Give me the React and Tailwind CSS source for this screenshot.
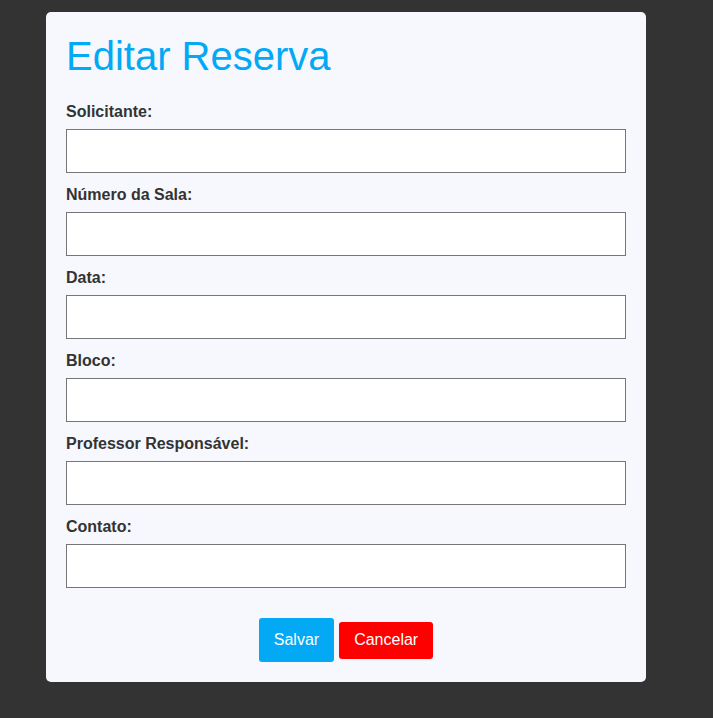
export default function App() {
  const fields = [
    "Solicitante:",
    "Número da Sala:",
    "Data:",
    "Bloco:",
    "Professor Responsável:",
    "Contato:",
  ];

  return (
    <div className="min-h-screen bg-[#333333] pt-[12px] font-['Liberation_Sans',Arial,sans-serif]">
      <div className="ml-[46px] w-[600px] rounded-[5px] bg-[#f7f8fd] px-5 pt-[21px] pb-5">
        <h1 className="mb-[23px] text-[40px] leading-[46px] text-[#03a9f4]">
          Editar Reserva
        </h1>

        <form onSubmit={(e) => e.preventDefault()}>
          {fields.map((label) => (
            <div key={label}>
              <label className="mb-[7px] block text-base font-bold leading-[20px] text-[#333333]">
                {label}
              </label>
              <input
                type="text"
                className="mb-[12px] block h-[44px] w-full border border-[#767676] bg-white px-3 text-base"
              />
            </div>
          ))}

          {/* Actions */}
          <div className="mt-[30px] flex items-center justify-center gap-[5px]">
            <button
              type="submit"
              className="h-[44px] rounded-[3px] bg-[#03a9f4] px-[15px] text-base leading-[18px] text-white"
            >
              Salvar
            </button>
            <button
              type="button"
              className="h-[37px] rounded-[3px] bg-[#ff0000] px-[15px] text-base leading-[18px] text-white"
            >
              Cancelar
            </button>
          </div>
        </form>
      </div>
    </div>
  );
}
